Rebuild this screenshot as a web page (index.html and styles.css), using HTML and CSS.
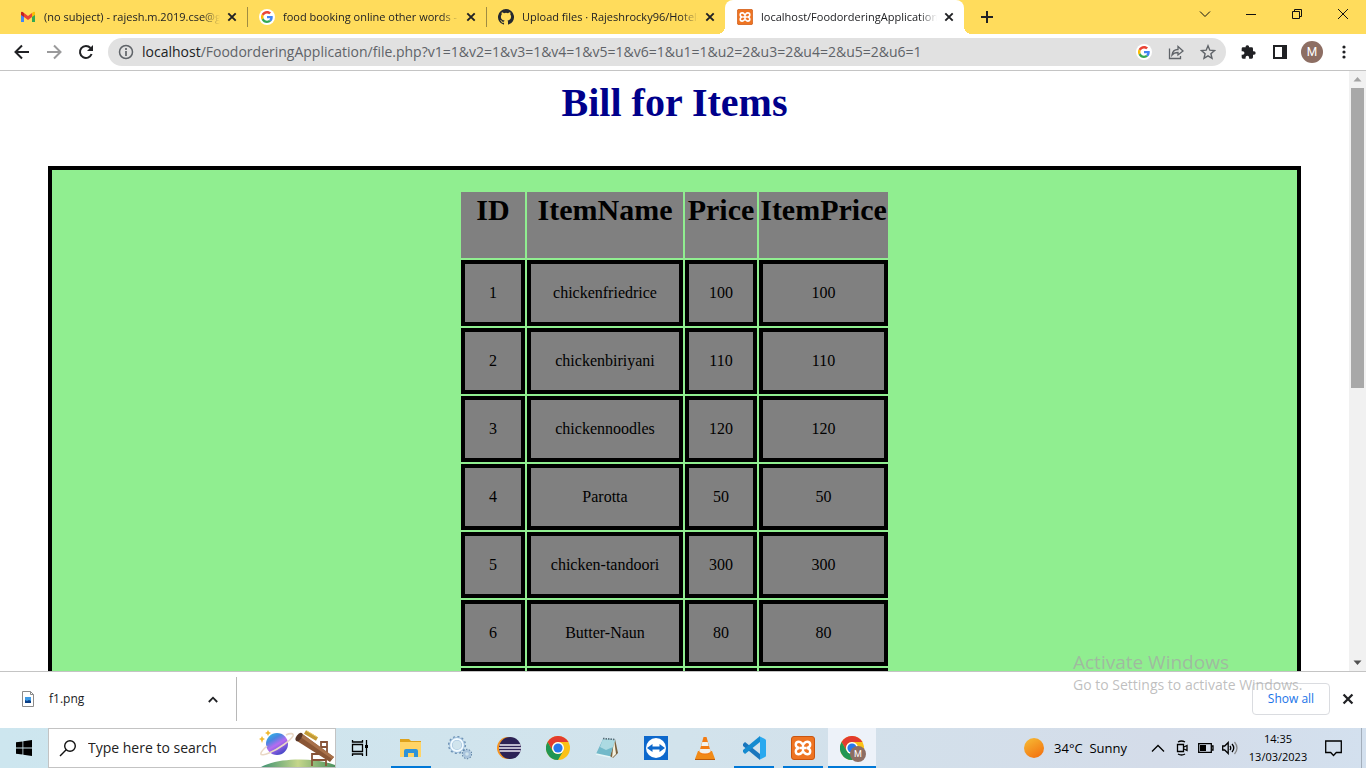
FILE: index.html
```html
<!DOCTYPE html>
<html lang="en">
<head>
<meta charset="utf-8">
<title>Bill for Items</title>
<link rel="stylesheet" href="styles.css">
</head>
<body>
<svg class="defs" aria-hidden="true">
  <symbol id="close" viewBox="0 0 10 10"><path d="M1.300 1.300 8.700 8.700M8.700 1.300 1.300 8.700" stroke="currentColor" stroke-width="1.900" fill="none"/></symbol>
  <symbol id="google" viewBox="0 0 48 48"><path fill="#ea4335" d="M24 9.500c3.500 0 6.700 1.200 9.200 3.600l6.900-6.900C35.900 2.400 30.500 0 24 0 14.600 0 6.500 5.400 2.600 13.200l8 6.200C12.400 13.700 17.700 9.500 24 9.500z"/><path fill="#4285f4" d="M47 24.500c0-1.600-.2-3.100-.4-4.500H24v9h12.900c-.6 3-2.200 5.500-4.700 7.200l7.700 6C44.400 38 47 31.800 47 24.500z"/><path fill="#fbbc05" d="M10.500 28.600a14 14 0 0 1 0-9.200l-8-6.200a24 24 0 0 0 0 21.600l8-6.200z"/><path fill="#34a853" d="M24 48c6.500 0 11.900-2.100 15.900-5.800l-7.700-6c-2.200 1.400-4.900 2.300-8.200 2.300-6.300 0-11.600-4.200-13.500-9.900l-8 6.200C6.500 42.600 14.600 48 24 48z"/></symbol>
  <symbol id="xampp" viewBox="0 0 24 24"><rect x=".5" y=".5" width="23" height="23" rx="2.500" fill="#ee7422" stroke="#c95510"/><path d="M8 12C3.500 11 4 5.800 7.800 5.800c2.800 0 3 2.400 4.200 2.400s1.400-2.400 4.200-2.400c3.800 0 4.300 5.200-.2 6.200 4.500 1 4 6.200.2 6.200-2.800 0-3-2.400-4.200-2.400s-1.400 2.400-4.200 2.400C4 18.200 3.500 13 8 12zM8.500 12h7M12 8.500v7" fill="none" stroke="#fff" stroke-width="2.400"/></symbol>
  <symbol id="chrome" viewBox="0 0 24 24"><circle cx="12" cy="12" r="12" fill="#fbc116"/><path fill="#e33b2e" d="M1.600 6A12 12 0 0 1 22.400 6H12a6 6 0 0 0-5.200 9z"/><path fill="#219653" d="M1.600 6A12 12 0 0 0 12 24l5.200-9A6 6 0 0 1 6.800 15z"/><circle cx="12" cy="12" r="6" fill="#fff"/><circle cx="12" cy="12" r="4.600" fill="#2878eb"/></symbol>
</svg>

<header class="tabs">
  <div class="tab">
    <svg class="fav" viewBox="0 0 16 16"><path fill="#4285f4" d="M1 4v9h3V7z"/><path fill="#34a853" d="M12 7v6h3V4z"/><path fill="#c5221f" d="M1 3.500C1 2.500 2.500 2.500 4 4v4L1 6z"/><path fill="#fbbc04" d="M15 3.500c0-1-1.500-1-3 .5v4l3-2z"/><path fill="#ea4335" d="M4 4l4 3 4-3v4l-4 3-4-3z"/></svg>
    <span class="title">(no subject) - rajesh.m.2019.cse@gmail.com</span><button class="x" aria-label="Close tab"><svg><use href="#close"/></svg></button>
  </div>
  <div class="tab">
    <span class="fav disc"><svg><use href="#google"/></svg></span>
    <span class="title">food booking online other words - Google</span><button class="x" aria-label="Close tab"><svg><use href="#close"/></svg></button>
  </div>
  <div class="tab last">
    <svg class="fav" viewBox="0 0 16 16"><path fill="#24292f" d="M8 0a8 8 0 0 0-2.530 15.590c.4.070.55-.17.55-.38v-1.490c-2.230.49-2.690-.94-2.690-.94-.36-.930-.890-1.170-.890-1.170-.73-.5.050-.49.050-.49.800.060 1.230.83 1.230.83.710 1.230 1.870.87 2.330.67.070-.52.280-.88.500-1.080-1.780-.200-3.640-.89-3.640-3.950 0-.87.310-1.590.82-2.150-.080-.2-.36-1.020.080-2.120 0 0 .67-.21 2.200.82a7.600 7.600 0 0 1 4 0c1.530-1.040 2.200-.82 2.200-.82.440 1.100.160 1.920.080 2.120.51.560.82 1.270.82 2.150 0 3.070-1.870 3.750-3.650 3.950.290.250.54.730.54 1.480v2.190c0 .21.150.46.550.38A8 8 0 0 0 8 0z"/></svg>
    <span class="title">Upload files · Rajeshrocky96/Hotel-Management</span><button class="x" aria-label="Close tab"><svg><use href="#close"/></svg></button>
  </div>
  <div class="tab active">
    <svg class="fav"><use href="#xampp"/></svg>
    <span class="title">localhost/FoodorderingApplication/file.php</span><button class="x" aria-label="Close tab"><svg><use href="#close"/></svg></button>
  </div>
  <button class="newtab" aria-label="New tab"><svg width="12" height="12" viewBox="0 0 12 12"><path d="M6 0v12M0 6h12" stroke="#202124" stroke-width="2"/></svg></button>
  <div class="win">
    <button aria-label="Search tabs"><svg width="12" height="8" viewBox="0 0 12 8"><path d="M1 1.500 6 6.500l5-5"/></svg></button>
    <button aria-label="Minimize"><svg width="10" height="10" viewBox="0 0 10 10"><path d="M0 5.500h10"/></svg></button>
    <button aria-label="Restore"><svg width="10" height="10" viewBox="0 0 10 10"><path d="M.5 2.500h7v7h-7zM2.500 2.500v-2h7v7h-2"/></svg></button>
    <button aria-label="Close"><svg width="10" height="10" viewBox="0 0 10 10"><path d="M0 0l10 10M10 0 0 10"/></svg></button>
  </div>
</header>

<nav class="toolbar">
  <button class="nav" aria-label="Back"><svg width="16" height="16" viewBox="0 0 16 16"><path d="M15 8H2M8 1.500 1.500 8 8 14.500" stroke="#202124"/></svg></button>
  <button class="nav" aria-label="Forward"><svg width="16" height="16" viewBox="0 0 16 16"><path d="M1 8h13M8 1.500 14.500 8 8 14.500" stroke="#9a9a9b"/></svg></button>
  <button class="nav" aria-label="Reload"><svg width="16" height="16" viewBox="0 0 16 16"><path d="M13.600 10A6 6 0 1 1 12.500 4" stroke="#202124"/><path d="M15 1v6H9z" fill="#202124"/></svg></button>
  <div class="omnibox">
    <svg width="16" height="16" viewBox="0 0 16 16" fill="none" stroke="#5f6368" stroke-width="1.500"><circle cx="8" cy="8" r="6.500"/><path d="M8 7v5M8 4v2" stroke-width="1.700"/></svg>
    <div class="url" role="textbox" aria-label="Address"><b>localhost</b>/FoodorderingApplication/file.php?v1=1&amp;v2=1&amp;v3=1&amp;v4=1&amp;v5=1&amp;v6=1&amp;u1=1&amp;u2=2&amp;u3=2&amp;u4=2&amp;u5=2&amp;u6=1</div>
    <button class="act" aria-label="Google Lens"><span class="fav disc"><svg><use href="#google"/></svg></span></button>
    <button class="act" aria-label="Share"><svg width="16" height="16" viewBox="0 0 16 16" fill="none" stroke="#5f6368" stroke-width="1.300"><path d="M1.500 4.500v10h11V12M4 11c.5-4 3-5.500 6-5.500V2.500l5 4.500-5 4V8.500C7.500 8.500 5.500 9 4 11z"/></svg></button>
    <button class="act" aria-label="Bookmark"><svg width="16" height="16" viewBox="0 0 16 16" fill="none" stroke="#5f6368" stroke-width="1.400"><path d="M8 1.800l1.800 4.400 4.700.4-3.600 3.100 1.100 4.600L8 11.800l-4 2.500 1.100-4.600L1.500 6.600l4.700-.4z"/></svg></button>
  </div>
  <button class="ext" aria-label="Extensions"><svg width="16" height="16" viewBox="0 0 24 24" fill="#202124"><path d="M21 11h-1.500V7a2 2 0 0 0-2-2h-4V3.500a2.700 2.700 0 0 0-5 0V5h-4a2 2 0 0 0-2 2v3.800H4a2.700 2.700 0 0 1 0 5.400H2.500V20a2 2 0 0 0 2 2h3.800v-1.500a2.700 2.700 0 0 1 5.400 0V22h3.800a2 2 0 0 0 2-2v-4H21a2.500 2.500 0 0 0 0-5z"/></svg></button>
  <button class="ext" aria-label="Side panel"><svg width="14" height="14" viewBox="0 0 14 14"><path d="M1 1h12v12H1z" fill="none" stroke="#202124" stroke-width="2"/><path d="M9 0h5v14H9z" fill="#202124"/></svg></button>
  <button class="ext" aria-label="Profile"><span class="avatar">M</span></button>
  <button class="ext" aria-label="Menu"><svg width="4" height="14" viewBox="0 0 4 14" fill="#202124"><circle cx="2" cy="2" r="1.600"/><circle cx="2" cy="7" r="1.600"/><circle cx="2" cy="12" r="1.600"/></svg></button>
</nav>

<div class="viewport">
  <main class="page">
    <h1>Bill for Items</h1>
    <section class="bill">
      <table>
        <colgroup><col class="c-id"><col class="c-name"><col class="c-price"><col class="c-total"></colgroup>
        <thead><tr><th>ID</th><th>ItemName</th><th>Price</th><th>ItemPrice</th></tr></thead>
        <tbody>
          <tr><td>1</td><td>chickenfriedrice</td><td>100</td><td>100</td></tr>
          <tr><td>2</td><td>chickenbiriyani</td><td>110</td><td>110</td></tr>
          <tr><td>3</td><td>chickennoodles</td><td>120</td><td>120</td></tr>
          <tr><td>4</td><td>Parotta</td><td>50</td><td>50</td></tr>
          <tr><td>5</td><td>chicken-tandoori</td><td>300</td><td>300</td></tr>
          <tr><td>6</td><td>Butter-Naun</td><td>80</td><td>80</td></tr>
          <tr><td></td><td></td><td></td><td></td></tr>
        </tbody>
      </table>
    </section>
  </main>
  <div class="scroll" aria-hidden="true">
    <svg width="17" height="17" viewBox="0 0 17 17"><path d="M8.500 6 12.500 10.500h-8z" fill="#a3a3a3"/></svg>
    <div class="thumb"></div>
    <svg width="17" height="17" viewBox="0 0 17 17"><path d="M8.500 11 12.500 6.500h-8z" fill="#505050"/></svg>
  </div>
</div>

<footer class="downloads">
  <button class="file">
    <svg width="12" height="16" viewBox="0 0 12 16"><path d="M.5.500h8l3 3v12H.5z" fill="#fff" stroke="#8b8b8b"/><path d="M8.500.500v3h3" fill="none" stroke="#8b8b8b"/><path d="M3 6h6v6H3z" fill="#3f9be6"/><path d="M3 9l2 1 2-1 2 1v2H3z" fill="#0b3f86"/></svg>
    <span>f1.png</span>
    <svg class="up" width="10" height="7" viewBox="0 0 10 7"><path d="M.800 6 5 1.700 9.200 6" fill="none" stroke="#202124" stroke-width="1.800"/></svg>
  </button>
  <button class="showall">Show all</button>
  <button class="x big" aria-label="Close downloads bar"><svg><use href="#close"/></svg></button>
  <div class="watermark"><p class="w1">Activate Windows</p><p class="w2">Go to Settings to activate Windows.</p></div>
</footer>

<div class="taskbar">
  <button class="tb" aria-label="Start"><svg width="16" height="16" viewBox="0 0 16 16"><path d="M0 2.300 6.500 1.400v6.100H0zM7.300 1.300 16 0v7.500H7.300zM0 8.400h6.500v6.200L0 13.700zM7.300 8.400H16V16l-8.700-1.300z"/></svg></button>
  <label class="search">
    <svg width="18" height="18" viewBox="0 0 18 18" fill="none" stroke="#111" stroke-width="1.400"><circle cx="11" cy="7" r="5.300"/><path d="M7.200 10.800 1 17"/></svg>
    <input type="text" placeholder="Type here to search" aria-label="Search">
    <svg width="76" height="38" viewBox="0 0 76 38">
      <defs><linearGradient id="pl" x1="0" y1="0" x2=".6" y2="1"><stop offset="0" stop-color="#25c5e8"/><stop offset=".35" stop-color="#4a86e0"/><stop offset=".6" stop-color="#b56cf0"/><stop offset="1" stop-color="#4a49c8"/></linearGradient><linearGradient id="hl"><stop offset="0" stop-color="#3f9272"/><stop offset=".5" stop-color="#c5d68a"/><stop offset="1" stop-color="#4c9260"/></linearGradient></defs>
      <path d="M2 38C18 29 54 28 76 36v2z" fill="url(#hl)"/>
      <circle cx="18" cy="15" r="11" fill="url(#pl)"/>
      <path d="M8 17C-1 25 0 28 10 24 20 20 32 11 34 7 35 4 31 4 27 6" fill="none" stroke="#ead8c5" stroke-width="1.600"/>
      <path d="M3 7l1 2 2 1-2 1-1 3-1-3-2-1 2-1zM9 1l1 2 2 1-2 1-1 2-1-2-2-1 2-1z" fill="#f0b92e"/>
      <path d="M53 37V25h14v12M62 26V13h6v14M53 31h14M62 18h6" fill="none" stroke="#875338" stroke-width="1.800"/>
      <path d="M42 4l33 24-4 5L38 12z" fill="#8a5635"/><path d="M42 4l33 24-2 2L40 7z" fill="#a8714a"/><ellipse cx="40" cy="8" rx="2.500" ry="4.800" transform="rotate(35 40 8)" fill="#583526"/><path d="M46 3l12 7" stroke="#c39a35" stroke-width="4"/><path d="M48 2l10 6" stroke="#ecce69"/>
    </svg>
  </label>
  <button class="tb view" aria-label="Task view"><svg width="18" height="18" viewBox="0 0 18 18" fill="none" stroke="#000" stroke-width="1.300"><path d="M1.500 5.500h10v7h-10zM1.500 1v2h10V1M1.500 17v-2h10v2M15.500 1v16"/><path d="M14 6h3v3h-3z" fill="#000" stroke="none"/></svg></button>
  <div class="apps">
    <button class="tb run" aria-label="File Explorer"><svg width="22" height="20" viewBox="0 0 22 20"><path d="M0 1h9l2 2h10v6H0z" fill="#dea21c"/><path d="M0 4h21v15H0z" fill="#ffd466"/><path d="M4 19v-6q0-2 2-2h10q2 0 2 2v6h-4v-4H8v4z" fill="#2f93d8"/></svg></button>
    <button class="tb" aria-label="Settings scripts"><svg width="24" height="24" viewBox="0 0 24 24" fill="none"><circle cx="9" cy="9" r="8" stroke="#6f93b5" stroke-width="2.200" stroke-dasharray="2 2.200"/><circle cx="9" cy="9" r="6.200" stroke="#9fbfdc" stroke-width="3.400"/><circle cx="9" cy="9" r="6" stroke="#f0faff" stroke-width="1.800"/><circle cx="19" cy="18" r="4.500" stroke="#5f83a5" stroke-width="1.400" stroke-dasharray="1.500 1.300"/><circle cx="19" cy="18" r="3" stroke="#a9c4dc" stroke-width="2.400"/></svg></button>
    <button class="tb" aria-label="Eclipse"><svg width="24" height="24" viewBox="0 0 24 24"><circle cx="11" cy="12" r="11" fill="#f7941e"/><circle cx="13" cy="12" r="11" fill="#2c2255"/><path d="M2.500 9h21M2 12h22M2.500 15h21" stroke="#eceaf4" stroke-width="1.700"/></svg></button>
    <button class="tb" aria-label="Chrome"><svg width="24" height="24"><use href="#chrome"/></svg></button>
    <button class="tb" aria-label="Notepad"><svg width="24" height="24" viewBox="0 0 24 24"><path d="M20 3l3 14-5 5-3-2z" fill="#79603d"/><path d="M19 3l2 15-4 4z" fill="#f4f1df"/><path d="M8 3l12 1-5 17-14-3z" fill="#72b9c9"/><path d="M8 3l12 1-2 7-7 3-6-3z" fill="#acdae2"/><path d="M8 2.500l12 1" stroke="#566d78" stroke-width="1.600" stroke-dasharray="1.500 1"/><path d="M1 18l14 3" stroke="#e5f5f7" stroke-width="1.500"/></svg></button>
    <button class="tb" aria-label="TeamViewer"><svg width="24" height="24" viewBox="0 0 24 24"><path d="M0 0h24v24H0z" fill="#0d68cc"/><circle cx="12" cy="12" r="10" fill="#fff"/><path d="M3 12l5.500-4v2.500h7V8l5.500 4-5.500 4v-2.500h-7V16z" fill="#0d68cc"/></svg></button>
    <button class="tb" aria-label="VLC"><svg width="24" height="24" viewBox="0 0 24 24"><path d="M5 15h14l3 8H2z" fill="#f18a16"/><path d="M10.500 1h3L18 17q-6 4-12 0z" fill="#f37c13"/><path d="M9.300 6h5.400l1 4H8.200zM7.200 13h9.600l.8 3q-5.600 3-11.200 0z" fill="#f2f2ee"/><path d="M2 23h20v1H2z" fill="#bb5c0c"/></svg></button>
    <button class="tb run" aria-label="Visual Studio Code"><svg width="24" height="24" viewBox="0 0 24 24"><path d="M1 8l2-2 15 12v6L1 10z" fill="#1a76bd"/><path d="M1 16l2 2L18 6V0L1 14z" fill="#158bd0"/><path d="M17 0l6 3q1 .5 1 1.500v15q0 1-1 1.500l-6 3q1-.5 1-2V2q0-1.500-1-2z" fill="#2aa9ef"/></svg></button>
    <button class="tb run" aria-label="XAMPP"><svg width="24" height="24"><use href="#xampp"/></svg></button>
    <button class="tb run current" aria-label="Chrome, M"><svg width="24" height="24"><use href="#chrome"/></svg><span class="badge">M</span></button>
  </div>
  <div class="tray">
    <button class="weather"><span class="sun"></span><span>34°C&nbsp; Sunny</span></button>
    <button class="ti" aria-label="Hidden icons"><svg width="14" height="8" viewBox="0 0 14 8"><path d="M1 7.500 7 1.500l6 6"/></svg></button>
    <button class="ti" aria-label="Meet now"><svg width="14" height="16" viewBox="0 0 14 16"><path d="M2.500 4.500h6v7h-6zM9 7l3-1.500v5L9 9M3 2q3.500-2 7 0M3 14q3.500 2 7 0"/></svg></button>
    <button class="ti" aria-label="Battery"><svg width="16" height="10" viewBox="0 0 16 10"><path d="M.7.700h12.600v8.600H.7zM14 3h1v4h-1"/><path d="M2 2h6v6H2z" fill="#000" stroke="none"/></svg></button>
    <button class="ti" aria-label="Volume"><svg width="16" height="14" viewBox="0 0 16 14"><path d="M.7 5h2l3.500-3.500v11L2.700 9h-2zM8 5q1.500 2 0 4M10 3q3.500 4 0 8"/><path d="M12.500 1q5 6 0 12" stroke="#888"/></svg></button>
    <button class="clock"><span>14:35</span><span>13/03/2023</span></button>
    <button class="note" aria-label="Notifications"><svg width="17" height="17" viewBox="0 0 17 17"><path d="M.7 1h15.600v11.500h-5L8.500 15.500 5.700 12.500h-5z"/></svg></button>
    <span class="edge"></span>
  </div>
</div>
</body>
</html>
```
FILE: styles.css
```css
* { box-sizing: border-box; }
body {
  margin: 0;
  height: 100vh;
  display: flex;
  flex-direction: column;
  overflow: hidden;
  background: #fff;
  color: #202124;
  font: 12px/16px "Open Sans", "Noto Sans", sans-serif;
}
button {
  border: 0;
  padding: 0;
  margin: 0;
  background: none;
  color: inherit;
  font: inherit;
  display: flex;
  align-items: center;
  justify-content: center;
  flex: none;
}
svg { display: block; flex: none; }
.defs { position: absolute; width: 0; height: 0; }

/* Tab strip */
.tabs { display: flex; flex: none; height: 34px; padding-left: 8px; background: #ffdc5c; }
.tab {
  display: flex;
  align-items: center;
  width: 239px;
  padding: 0 10px 0 12px;
  position: relative;
}
.tab::after {
  content: "";
  position: absolute;
  right: -1px;
  top: 7px;
  width: 1px;
  height: 20px;
  background: #a08c42;
}
.tab.last::after { display: none; }
.tab.active { background: #fff; border-radius: 8px 8px 0 0; }
.tab.active::before, .tab.active::after {
  content: "";
  position: absolute;
  top: auto;
  bottom: 0;
  left: -8px;
  width: 8px;
  height: 8px;
  background: radial-gradient(circle at 0 0, transparent 8px, #fff 8px);
}
.tab.active::after { left: auto; right: -8px; background: radial-gradient(circle at 100% 0, transparent 8px, #fff 8px); }
.fav { width: 16px; height: 16px; flex: none; }
.disc { display: flex; align-items: center; justify-content: center; background: #fff; border-radius: 50%; }
.disc svg { width: 12px; height: 12px; }
.title {
  flex: 1;
  min-width: 0;
  margin: 0 7px 0 8px;
  font-size: 11px;
  white-space: nowrap;
  overflow: hidden;
  -webkit-mask-image: linear-gradient(90deg, #000 90%, transparent);
  mask-image: linear-gradient(90deg, #000 90%, transparent);
}
.x { width: 10px; height: 16px; }
.x svg { width: 10px; height: 10px; }
.newtab { width: 28px; margin-left: 9px; }
.win { display: flex; margin-left: auto; height: 28px; }
.win button { width: 46px; }
.win svg { fill: none; stroke: #111; stroke-width: 1; }

/* Toolbar */
.toolbar { display: flex; align-items: center; flex: none; height: 37px; padding: 0 6px; border-bottom: 1px solid #c4c4c4; }
.nav { width: 32px; height: 32px; }
.nav svg { fill: none; stroke-width: 2; }
.omnibox {
  display: flex;
  align-items: center;
  flex: 1;
  min-width: 0;
  height: 28px;
  margin: 0 6px;
  padding: 0 2px 0 10px;
  border-radius: 14px;
  background: #e1e1e1;
}
.url { flex: 1; min-width: 0; margin-left: 8px; overflow: hidden; white-space: nowrap; font-size: 14px; line-height: 20px; color: #5f6368; }
.url b { font-weight: 400; color: #202124; }
.act { width: 32px; height: 28px; }
.ext { width: 32px; height: 32px; }
.avatar, .badge { display: flex; align-items: center; justify-content: center; border-radius: 50%; background: #8d6e63; color: #fff; font-family: Roboto, sans-serif; }
.avatar { width: 22px; height: 22px; }

/* Web page */
.viewport { display: flex; flex: 1; min-height: 0; }
.page { flex: 1; min-width: 0; overflow: hidden; padding: 8px 48px 0; font-family: "Liberation Serif", serif; font-size: 16px; line-height: 18px; color: #000; }
h1 { margin: 0 0 40px; font-size: 40px; line-height: 47px; text-align: center; color: #00008b; }
.bill { border: 4px solid #000; background: #90ee90; padding: 20px 0; }
table { table-layout: fixed; width: 431px; margin: 0 auto; border-spacing: 2px; text-align: center; }
.c-id { width: 64px; }
.c-name { width: 156px; }
.c-price { width: 72px; }
.c-total { width: 129px; }
th, td { height: 66px; padding: 1px; background: #808080; }
th { vertical-align: top; font-size: 30px; line-height: 34px; white-space: nowrap; }
td { border: 4px solid #000; }
.scroll { display: flex; flex-direction: column; width: 17px; flex: none; background: #f1f1f1; }
.thumb { height: 300px; margin: 0 2px auto; background: #a8a8a8; }

/* Downloads bar */
.downloads { display: flex; align-items: center; flex: none; height: 57px; padding: 0 12px 2px 0; border-top: 1px solid #c4c4c4; position: relative; font-size: 12px; }
.file { width: 237px; height: 44px; padding: 0 18px 0 22px; border-right: 1px solid #b8b8b8; }
.file span { margin-left: 15px; }
.file .up { margin-left: auto; }
.showall { margin-left: auto; width: 78px; height: 32px; border: 1px solid #dadce0; border-radius: 4px; color: #1a73e8; font-size: 12px; font-weight: 500; }
.big { width: 12px; margin-left: 12px; }
.big svg { width: 12px; height: 12px; }
.watermark { position: absolute; right: 56px; top: -22px; width: 237px; color: #a6a6a6b8; white-space: nowrap; pointer-events: none; }
.watermark p { margin: 0; }
.w1 { font-size: 19px; line-height: 24px; }
.w2 { font-size: 14px; line-height: 22px; }

/* Taskbar */
.taskbar { display: flex; flex: none; height: 40px; background: linear-gradient(90deg, #cde6ef, #d2e3ec 50%, #d4dce9 85%, #d3e0ee); color: #000; }
.tb { width: 48px; height: 40px; position: relative; }
.search { display: flex; align-items: center; width: 288px; flex: none; padding-left: 10px; border: 1px solid #c3c3c3; background: #fff; }
.search input { flex: 1; min-width: 0; margin: 0 0 0 11px; padding: 0; border: 0; outline: 0; background: none; font: 14px/20px "Open Sans", sans-serif; }
.search input::placeholder { color: #222; opacity: 1; }
.view { margin-right: 3px; }
.apps { display: flex; gap: 1px; }
.run::after { content: ""; position: absolute; left: 4px; right: 4px; bottom: 0; height: 2px; background: #0078d7; }
.current { background: #edf2f9; }
.current::after { left: 0; right: 0; }
.badge { position: absolute; left: 22px; top: 18px; width: 16px; height: 16px; font-size: 9px; }
.tray { display: flex; align-items: center; margin-left: auto; }
.tray svg { fill: none; stroke: #000; stroke-width: 1.3; }
.weather { font-size: 13px; margin-right: 19px; gap: 10px; }
.sun { width: 20px; height: 20px; border-radius: 50%; background: linear-gradient(150deg, #f6be36, #f36a0c); }
.ti { width: 24px; height: 40px; }
.clock { flex-direction: column; width: 72px; font-size: 11px; line-height: 18px; }
.note { width: 38px; height: 40px; }
.edge { width: 1px; height: 40px; margin: 0 4px 0 9px; background: #a3aebb; }
```
